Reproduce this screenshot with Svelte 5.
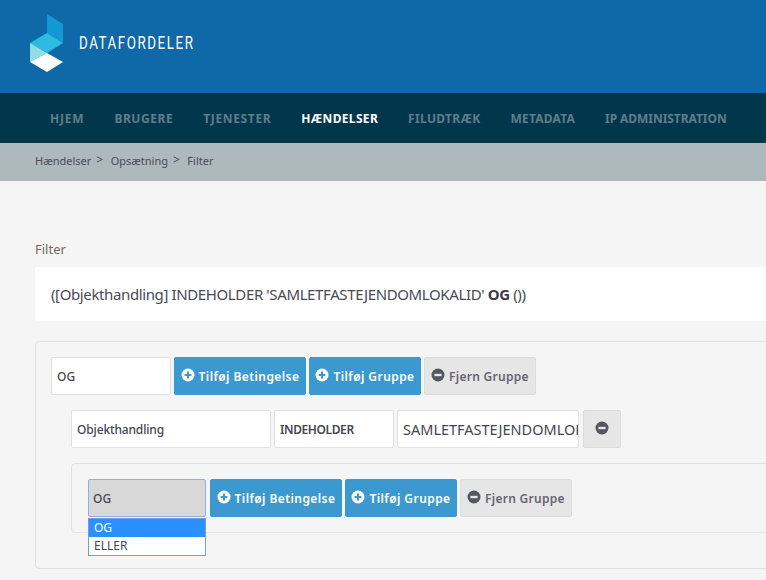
<script lang="ts">
  const navItems = ["HJEM", "BRUGERE", "TJENESTER", "HÆNDELSER", "FILUDTRÆK", "METADATA", "IP ADMINISTRATION"];
  const active = "HÆNDELSER";
</script>

{#snippet plus()}
  <svg class="ico" viewBox="0 0 14 14" aria-hidden="true">
    <circle cx="7" cy="7" r="6.5" fill="#fff" />
    <path d="M3.6 7h6.8M7 3.6v6.8" stroke="#3b99d0" stroke-width="2" />
  </svg>
{/snippet}

{#snippet minus()}
  <svg class="ico" viewBox="0 0 14 14" aria-hidden="true">
    <circle cx="7" cy="7" r="6.5" fill="#55565f" />
    <path d="M3.4 7h7.2" stroke="#e6e6e6" stroke-width="2.4" />
  </svg>
{/snippet}

{#snippet groupButtons()}
  <button class="btn blue">{@render plus()}Tilføj Betingelse</button>
  <button class="btn blue">{@render plus()}Tilføj Gruppe</button>
  <button class="btn grey">{@render minus()}<span class="fjern">Fjern Gruppe</span></button>
{/snippet}

<div class="page">
  <header class="top">
    <svg class="logo" viewBox="0 0 36 60" aria-hidden="true">
      <polygon points="17,0 33,10 33,29 17,19" fill="#1398d6" />
      <polygon points="17,19 33,29 17,39 0,29" fill="#2dbce0" />
      <polygon points="0,29 17,39 0,48" fill="#8fdde6" />
      <polygon points="17,39 33,48 17,58 0,48" fill="#fff" />
    </svg>
    <span class="brand">DATAFORDELER</span>
  </header>

  <nav class="nav">
    {#each navItems as item}
      <span class="nav-item" class:active={item === active}>{item}</span>
    {/each}
  </nav>

  <div class="crumbs">
    <span>Hændelser</span><span class="sep">&gt;</span>
    <span>Opsætning</span><span class="sep">&gt;</span>
    <span>Filter</span>
  </div>

  <main class="content">
    <div class="label">Filter</div>
    <div class="expr">([Objekthandling] INDEHOLDER 'SAMLETFASTEJENDOMLOKALID' <b>OG</b> ())</div>

    <section class="group">
      <div class="row">
        <div class="field w120">OG</div>
        {@render groupButtons()}
      </div>

      <div class="row cond">
        <div class="field w200 attr">Objekthandling</div>
        <div class="field w120 strong">INDEHOLDER</div>
        <div class="field w182 value"><span>SAMLETFASTEJENDOMLOKALID</span></div>
        <button class="btn grey only">{@render minus()}</button>
      </div>

      <section class="group inner">
        <div class="row">
          <div class="select-wrap">
            <div class="field select">OG</div>
            <ul class="options">
              <li class="selected">OG</li>
              <li>ELLER</li>
            </ul>
          </div>
          {@render groupButtons()}
        </div>
      </section>
    </section>
  </main>
</div>

<style>
  :global(body) {
    margin: 0;
    background: #f5f5f5;
    overflow: hidden;
  }

  .page {
    width: 766px;
    height: 580px;
    overflow: hidden;
    font-family: "Noto Sans", "Open Sans", sans-serif;
    color: #4a4a55;
  }

  .top {
    height: 93px;
    background: #0f68a8;
    display: flex;
    align-items: flex-start;
    box-sizing: border-box;
    padding: 14px 0 0 30px;
  }

  .logo {
    width: 36px;
    height: 60px;
    flex: none;
  }

  .brand {
    margin: 19px 0 0 13px;
    font-family: Roboto, sans-serif;
    font-weight: 400;
    font-size: 16px;
    line-height: 20px;
    letter-spacing: 1.85px;
    color: #fff;
    transform: scale(0.835, 1.14);
    transform-origin: left center;
  }

  .nav {
    height: 50px;
    background: #02374b;
    display: flex;
    align-items: center;
    gap: 30px;
    padding-left: 50px;
    box-sizing: border-box;
  }

  .nav-item {
    font-size: 12px;
    font-weight: 700;
    letter-spacing: 0.55px;
    color: #5f7d8b;
    white-space: nowrap;
  }

  .nav-item:nth-child(1) { letter-spacing: 0.8px; }
  .nav-item:nth-child(3) { letter-spacing: 0.66px; }
  .nav-item:nth-child(4) { letter-spacing: 0.33px; }
  .nav-item:nth-child(5) { letter-spacing: 0.33px; }
  .nav-item:nth-child(6) { letter-spacing: 0.2px; }
  .nav-item:nth-child(7) { letter-spacing: -0.05px; }

  .nav-item.active {
    color: #fff;
  }

  .crumbs {
    height: 38px;
    background: #adb9bd;
    display: flex;
    align-items: center;
    padding: 0 0 3px 35px;
    font-size: 11px;
    color: #4b4a5c;
    box-sizing: border-box;
  }

  .sep {
    margin: -3px 7.5px 0 5px;
    font-size: 12px;
  }

  .content {
    padding: 59px 0 0 35px;
    width: 900px;
  }

  .label {
    font-size: 13px;
    line-height: 18px;
    color: #6f6a66;
  }

  .expr {
    margin-top: 9px;
    height: 54px;
    background: #fff;
    border-radius: 3px;
    line-height: 54px;
    padding-left: 16px;
    font-size: 15px;
    letter-spacing: -0.38px;
    color: #4a4a55;
    white-space: pre;
  }

  .expr b {
    color: #3c3c46;
  }

  .group {
    margin-top: 20px;
    border: 1px solid #e2e2e2;
    border-radius: 4px;
    padding: 15px;
    height: 228px;
    box-sizing: border-box;
  }

  .group.inner {
    margin: 15px 0 0 20px;
    height: 70px;
    padding: 15px 16px;
  }

  .row {
    display: flex;
    gap: 3px;
    height: 38px;
  }

  .row.cond {
    margin: 15px 0 0 20px;
  }

  .field {
    height: 38px;
    box-sizing: border-box;
    background: #fff;
    border: 1px solid #e0e0e0;
    border-radius: 2px;
    display: flex;
    align-items: center;
    padding-left: 5px;
    font-size: 12px;
    font-weight: 500;
    color: #45454f;
    flex: none;
    white-space: nowrap;
    overflow: hidden;
  }

  .w120 { width: 120px; }
  .w200 { width: 200px; }
  .w182 { width: 182px; }

  .attr {
    letter-spacing: -0.15px;
  }

  .strong {
    font-weight: 600;
    letter-spacing: -0.4px;
  }

  .value {
    font-size: 14.5px;
    font-weight: 400;
    padding: 0 0 0 5px;
  }

  .value span {
    display: block;
    width: 175px;
    overflow: hidden;
  }

  .btn {
    height: 38px;
    box-sizing: border-box;
    border-radius: 2px;
    display: flex;
    align-items: center;
    justify-content: center;
    gap: 4px;
    padding: 0;
    font-family: inherit;
    font-size: 12px;
    font-weight: 600;
    letter-spacing: 0.42px;
    white-space: nowrap;
    flex: none;
    width: 132px;
  }

  .btn.blue {
    background: #3b99d0;
    border: 1px solid #3b99d0;
    color: #fff;
  }

  .btn.blue + .btn.blue {
    width: 112px;
  }

  .btn.grey {
    background: #e6e6e6;
    border: 1px solid #dcdcdc;
    color: #666570;
    width: 112px;
  }

  .fjern {
    letter-spacing: 0.28px;
  }

  .btn.only {
    width: 38px;
    margin-left: 1px;
  }

  .ico {
    width: 14px;
    height: 14px;
    flex: none;
    margin-top: -2px;
  }

  .select-wrap {
    position: relative;
    width: 118px;
    margin-right: 1px;
    flex: none;
  }

  .select {
    width: 118px;
    background: #d8d8d8;
    border: 1px solid #8fb0e4;
    padding-left: 4px;
  }

  .options {
    position: absolute;
    top: 39px;
    left: 0;
    width: 118px;
    margin: 0;
    padding: 0;
    list-style: none;
    box-sizing: border-box;
    border: 1px solid #7a9bd6;
    background: #fff;
    font-size: 12px;
    line-height: 18px;
    color: #45454f;
  }

  .options li {
    padding-left: 5px;
    height: 18px;
  }

  .options .selected {
    background: #2a90ff;
    color: #fff;
  }
</style>
